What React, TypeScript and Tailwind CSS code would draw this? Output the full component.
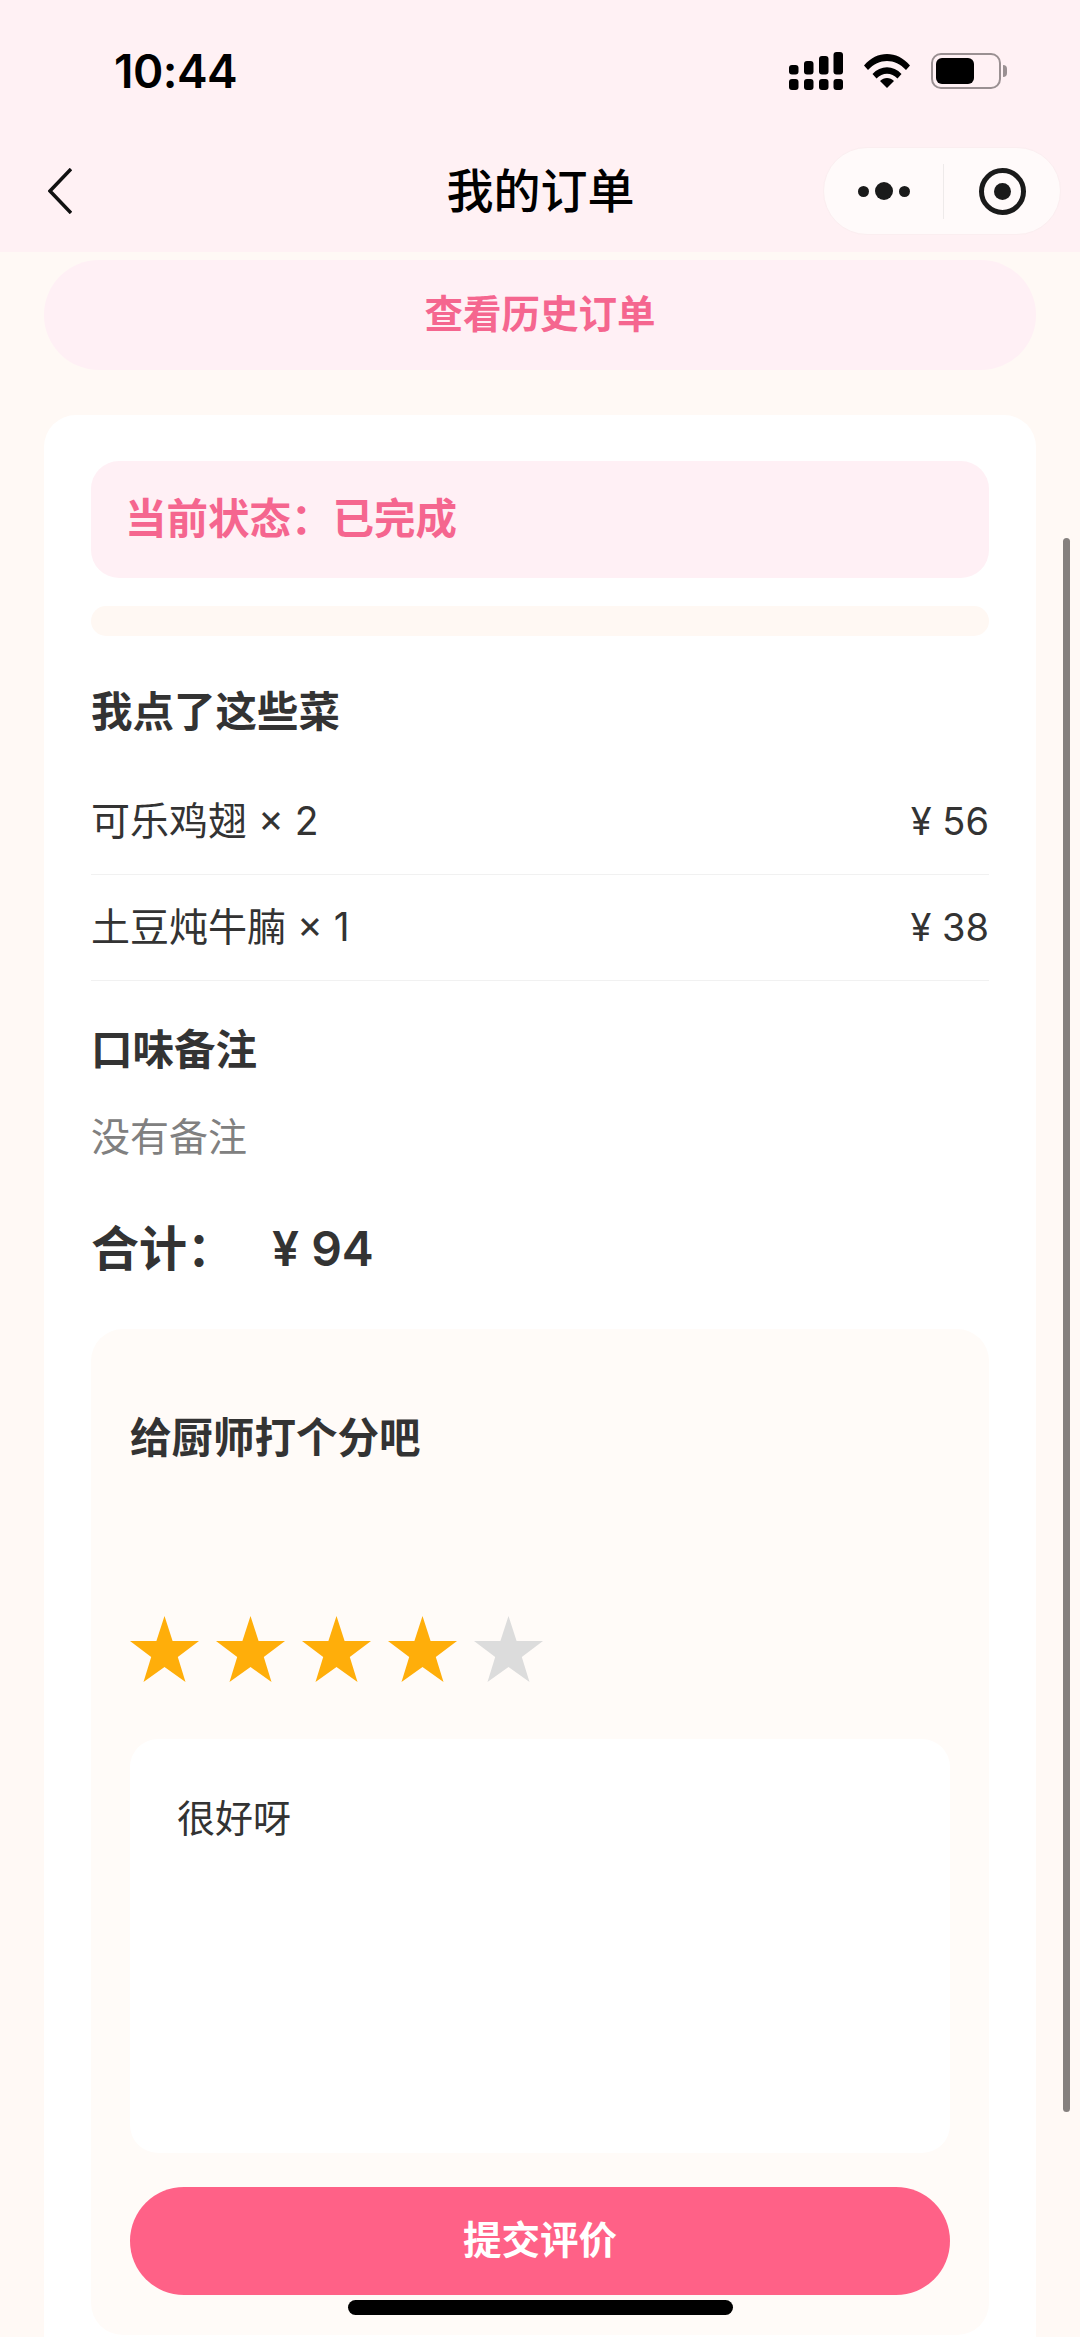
import React from 'react';

const Star = ({ on }: { on: boolean }) => (
  <svg width="69" height="66" viewBox="0 0 69 66" className={on ? 'text-[#ffae0a]' : 'text-[#dcdcdc]'}>
    <path fill="currentColor" d="M34.5 0 L42.6 25 L69 25 L47.8 41 L55.5 66 L34.5 51 L13.5 66 L21.2 41 L0 25 L26.4 25 Z" />
  </svg>
);

const SignalIcon = () => (
  <svg width="54" height="38" viewBox="0 0 54 38">
    <rect x="0" y="13" width="9.5" height="9.5" rx="3" />
    <rect x="15" y="9" width="9.5" height="13.5" rx="3" />
    <rect x="30" y="4" width="9.5" height="18.5" rx="3" />
    <rect x="44.5" y="0" width="9.5" height="22.5" rx="3" />
    <rect x="0" y="27" width="9.5" height="11" rx="3" />
    <rect x="15" y="27" width="9.5" height="11" rx="3" />
    <rect x="30" y="27" width="9.5" height="11" rx="3" />
    <rect x="44.5" y="27" width="9.5" height="11" rx="3" />
  </svg>
);

const WifiIcon = () => (
  <svg width="46" height="34" viewBox="0 0 46 34">
    <path d="M0 11.5 C13 -3.8 33 -3.8 46 11.5 L42 16 C31 4 15 4 4 16 Z" />
    <path d="M8.5 20 C16.5 11 29.5 11 37.5 20 L33.5 24.5 C27.5 18 18.5 18 12.5 24.5 Z" />
    <path d="M16 27 C20 23 26 23 30 27 L23 34 Z" />
  </svg>
);

const BatteryIcon = () => (
  <div className="flex items-center gap-[2px]">
    <div className="w-[70px] h-[36px] rounded-[10px] border-[2px] border-[#9a9092] p-[3px]">
      <div className="w-[38px] h-full rounded-[6px] bg-black" />
    </div>
    <div className="w-[4px] h-[12px] rounded-r-[4px] bg-[#9a9092]" />
  </div>
);

const ItemRow = ({ name, price }: { name: string; price: string }) => (
  <div className="h-[106px] flex items-center justify-between border-b border-[#f1f1f1] text-[39px] text-[#333333]">
    <span>{name}</span>
    <span className="text-[38px]">{price}</span>
  </div>
);

export default function App() {
  return (
    <div className="relative w-[1080px] h-[2337px] overflow-hidden bg-[#fff9f5] font-['Inter','Noto_Sans_CJK_SC',sans-serif]">
      <header className="h-[252px] bg-[#fff1f4]">
        <div className="h-[142px] pl-[114px] pr-[73px] flex items-center justify-between">
          <span className="text-[46px] font-semibold text-black tracking-[-0.5px]">10:44</span>
          <div className="flex items-center gap-[21px]">
            <SignalIcon />
            <WifiIcon />
            <BatteryIcon />
          </div>
        </div>
        <div className="h-[98px] pl-[20px] pr-[19px] grid grid-cols-[1fr_auto_1fr] items-center">
          <div className="pl-[28px]">
            <svg width="24" height="46" viewBox="0 0 24 46" fill="none" stroke="#111111" strokeWidth="3.5">
              <path d="M23 1 L2 23 L23 45" />
            </svg>
          </div>
          <h1 className="text-[47px] font-medium text-black">我的订单</h1>
          <div className="flex justify-end">
            <div className="w-[238px] h-[88px] rounded-full bg-[#fffafa] border border-[#fbeef0] flex items-center">
              <div className="w-[119px] flex items-center justify-center gap-[6px]">
                <span className="w-[11px] h-[11px] rounded-full bg-[#1a1a1a]" />
                <span className="w-[18px] h-[18px] rounded-full bg-[#1a1a1a]" />
                <span className="w-[11px] h-[11px] rounded-full bg-[#1a1a1a]" />
              </div>
              <div className="w-px h-[55px] bg-[#eeeaea]" />
              <div className="flex-1 flex items-center justify-center">
                <div className="w-[47px] h-[47px] rounded-full border-[5px] border-[#1a1a1a] flex items-center justify-center">
                  <span className="w-[17px] h-[17px] rounded-full bg-[#1a1a1a]" />
                </div>
              </div>
            </div>
          </div>
        </div>
      </header>

      <main className="px-[44px] pt-[8px]">
        <button className="w-full h-[110px] rounded-full bg-[#fff0f5] text-[38.5px] font-semibold text-[#f5668f]">
          查看历史订单
        </button>

        <section className="mt-[45px] bg-white rounded-[32px] px-[47px] pt-[46px] pb-[40px]">
          <div className="h-[117px] rounded-[28px] bg-[#fff0f5] px-[34px] flex items-center text-[41.5px] font-semibold text-[#f5668f]">
            当前状态：已完成
          </div>
          <div className="mt-[28px] h-[30px] rounded-[15px] bg-[#fff8f3]" />

          <h2 className="mt-[49px] text-[41.5px] leading-[54px] font-semibold text-[#333333]">我点了这些菜</h2>
          <div className="mt-[30px]">
            <ItemRow name="可乐鸡翅 × 2" price="¥ 56" />
            <ItemRow name="土豆炖牛腩 × 1" price="¥ 38" />
          </div>

          <h2 className="mt-[42px] text-[41.5px] leading-[54px] font-semibold text-[#333333]">口味备注</h2>
          <p className="mt-[33px] text-[39px] leading-[54px] text-[#808080]">没有备注</p>
          <div className="mt-[55px] flex items-center text-[48px] leading-[60px] font-semibold text-[#333333]">
            <span className="w-[181px]">合计：</span>
            <span>¥ 94</span>
          </div>

          <div className="mt-[50px] h-[1006px] rounded-[32px] bg-[#fffbf8] px-[39px] pt-[82px]">
            <h3 className="text-[41.5px] leading-[54px] font-semibold text-[#333333]">给厨师打个分吧</h3>
            <div className="mt-[151px] flex gap-[17px]">
              <Star on />
              <Star on />
              <Star on />
              <Star on />
              <Star on={false} />
            </div>
            <div className="mt-[57px] h-[414px] rounded-[28px] bg-white px-[47px] pt-[52px] text-[38px] leading-[54px] text-[#333333]">
              很好呀
            </div>
            <button className="mt-[34px] w-full h-[108px] rounded-full bg-[#ff6187] text-[38.5px] font-semibold text-white">
              提交评价
            </button>
          </div>
        </section>
      </main>

      <div className="absolute left-[1063px] top-[538px] w-[7px] h-[1574px] rounded-full bg-[#85807e]" />
      <div className="absolute left-[348px] top-[2300px] w-[385px] h-[15px] rounded-full bg-black" />
    </div>
  );
}
